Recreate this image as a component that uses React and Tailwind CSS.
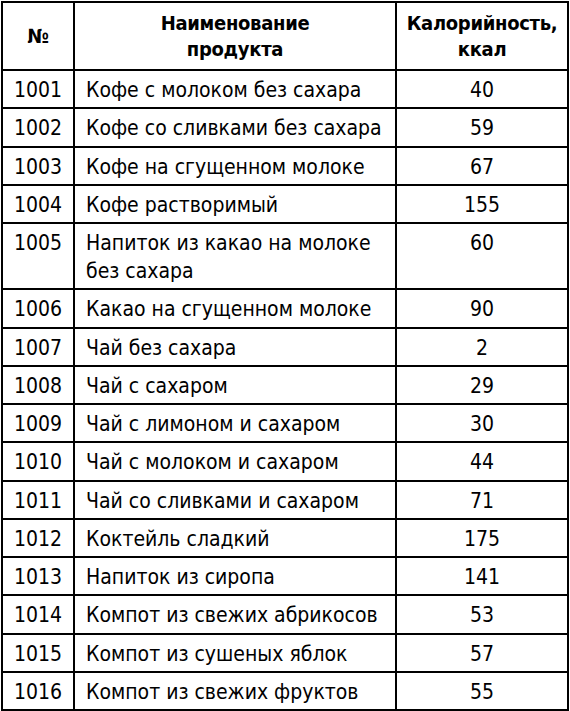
const rows = [
  ['1001', 'Кофе с молоком без сахара', '40'],
  ['1002', 'Кофе со сливками без сахара', '59'],
  ['1003', 'Кофе на сгущенном молоке', '67'],
  ['1004', 'Кофе растворимый', '155'],
  ['1005', 'Напиток из какао на молоке без сахара', '60'],
  ['1006', 'Какао на сгущенном молоке', '90'],
  ['1007', 'Чай без сахара', '2'],
  ['1008', 'Чай с сахаром', '29'],
  ['1009', 'Чай с лимоном и сахаром', '30'],
  ['1010', 'Чай с молоком и сахаром', '44'],
  ['1011', 'Чай со сливками и сахаром', '71'],
  ['1012', 'Коктейль сладкий', '175'],
  ['1013', 'Напиток из сиропа', '141'],
  ['1014', 'Компот из свежих абрикосов', '53'],
  ['1015', 'Компот из сушеных яблок', '57'],
  ['1016', 'Компот из свежих фруктов', '55'],
]

export default function App() {
  return (
    <div className="w-[570px] h-[711px] bg-white p-[1px] text-black font-['Liberation_Sans_Narrow','DejaVu_Sans_Condensed',sans-serif] [font-stretch:condensed]">
      <table className="w-[568px] table-fixed border-collapse border-2 border-black text-[21px] leading-[28px]">
        <thead>
          <tr className="font-bold text-[20px] tracking-[-0.3px] leading-[26px]">
            <th className="w-[72px] border-2 border-black align-middle pt-[7px] pb-[7px]">№</th>
            <th className="border-2 border-black align-middle px-2 pt-[7px] pb-[7px]">Наименование<br />продукта</th>
            <th className="w-[172px] border-2 border-black align-middle pt-[7px] pb-[7px]">Калорийность,<br />ккал</th>
          </tr>
        </thead>
        <tbody>
          {rows.map(([id, name, kcal]) => (
            <tr key={id}>
              <td className="border-2 border-black align-top text-center pt-[5px] pb-[3.25px]">{id}</td>
              <td className="border-2 border-black align-top pl-[11px] pr-1 pt-[5px] pb-[3.25px]">{name}</td>
              <td className="border-2 border-black align-top text-center pt-[5px] pb-[3.25px]">{kcal}</td>
            </tr>
          ))}
        </tbody>
      </table>
    </div>
  )
}
